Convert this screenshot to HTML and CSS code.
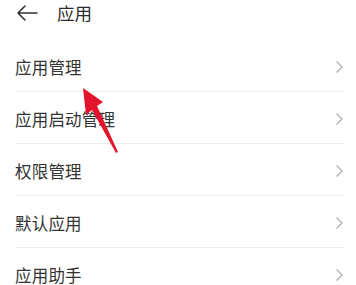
FILE: index.html
```html
<!DOCTYPE html>
<html lang="zh">
<head>
<meta charset="utf-8">
<link rel="stylesheet" href="styles.css">
</head>
<body>
<div class="page">
  <header class="header">
    <svg class="back" width="22" height="16" viewBox="0 0 22 16">
      <path d="M9 1 L2 8 L9 15 M2 8 H21" fill="none" stroke="#333" stroke-width="1.6" stroke-linecap="round" stroke-linejoin="round"/>
    </svg>
    <span class="title">应用</span>
  </header>
  <ul class="list">
    <li class="row"><span class="label">应用管理</span><span class="chev"><svg width="9" height="14" viewBox="0 0 9 14"><path d="M1.5 1.5 L7 7 L1.5 12.5" fill="none" stroke="#b3b3b3" stroke-width="1.4"/></svg></span></li>
    <li class="row"><span class="label">应用启动管理</span><span class="chev"><svg width="9" height="14" viewBox="0 0 9 14"><path d="M1.5 1.5 L7 7 L1.5 12.5" fill="none" stroke="#b3b3b3" stroke-width="1.4"/></svg></span></li>
    <li class="row"><span class="label">权限管理</span><span class="chev"><svg width="9" height="14" viewBox="0 0 9 14"><path d="M1.5 1.5 L7 7 L1.5 12.5" fill="none" stroke="#b3b3b3" stroke-width="1.4"/></svg></span></li>
    <li class="row"><span class="label">默认应用</span><span class="chev"><svg width="9" height="14" viewBox="0 0 9 14"><path d="M1.5 1.5 L7 7 L1.5 12.5" fill="none" stroke="#b3b3b3" stroke-width="1.4"/></svg></span></li>
    <li class="row"><span class="label">应用助手</span><span class="chev"><svg width="9" height="14" viewBox="0 0 9 14"><path d="M1.5 1.5 L7 7 L1.5 12.5" fill="none" stroke="#b3b3b3" stroke-width="1.4"/></svg></span></li>
  </ul>
  <svg class="pointer" width="356" height="285" viewBox="0 0 356 285">
    <polygon points="83,88 103,102 97,106 118,152 116,153 92,110 86,115" fill="#e3142b"/>
  </svg>
</div>
</body>
</html>
```
FILE: styles.css
```css
html, body {
  margin: 0;
  padding: 0;
  background: #ffffff;
}
.page {
  position: relative;
  width: 356px;
  height: 285px;
  overflow: hidden;
  font-family: "Noto Sans CJK SC", "Noto Sans", sans-serif;
  color: #333333;
}
.header {
  display: flex;
  align-items: center;
  height: 25px;
  margin-bottom: 15px;
  padding-left: 16px;
}
.back {
  display: block;
}
.title {
  margin-left: 19px;
  font-size: 17.5px;
  line-height: 25px;
  color: #2b2b2b;
}
.list {
  list-style: none;
  margin: 0;
  padding: 0 11px 0 15px;
}
.row {
  display: flex;
  align-items: center;
  justify-content: space-between;
  box-sizing: border-box;
  height: 52px;
  padding-top: 2px;
  border-bottom: 1px solid #ededed;
}
.label {
  font-size: 16.5px;
  line-height: 22px;
  color: #333333;
  letter-spacing: 0.2px;
}
.chev {
  display: flex;
  margin-right: 1px;
}
.pointer {
  position: absolute;
  left: 0;
  top: 0;
  pointer-events: none;
}
```
